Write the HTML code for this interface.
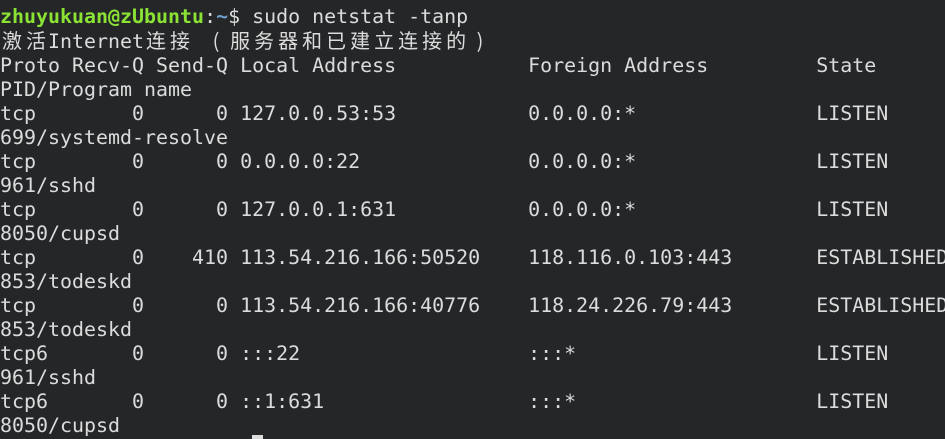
<!DOCTYPE html>
<html><head><meta charset="utf-8"><style>
html,body{margin:0;padding:0;background:#242628;width:945px;height:439px;overflow:hidden}
pre{position:absolute;left:0;top:4px;margin:0;font-family:"DejaVu Sans Mono","Liberation Mono","Noto Sans CJK SC",monospace;font-size:19.95px;line-height:24px;color:#dcdcdc;white-space:pre}
.g{color:#8ae234;font-weight:bold}.b{color:#729fcf;font-weight:bold}
.c{display:inline-block;width:24px;text-align:center;font-family:"Noto Sans CJK SC",sans-serif}
.cur{position:absolute;left:252px;top:435px;width:11px;height:4px;background:#dcdcdc}
</style></head><body>
<pre><span class="g">zhuyukuan@zUbuntu</span>:<span class="b">~</span>$ sudo netstat -tanp
<span class="c">激</span><span class="c">活</span>Internet<span class="c">连</span><span class="c">接</span> <span class="c">(</span><span class="c">服</span><span class="c">务</span><span class="c">器</span><span class="c">和</span><span class="c">已</span><span class="c">建</span><span class="c">立</span><span class="c">连</span><span class="c">接</span><span class="c">的</span><span class="c">)</span>
Proto Recv-Q Send-Q Local Address           Foreign Address         State
PID/Program name
tcp        0      0 127.0.0.53:53           0.0.0.0:*               LISTEN
699/systemd-resolve
tcp        0      0 0.0.0.0:22              0.0.0.0:*               LISTEN
961/sshd
tcp        0      0 127.0.0.1:631           0.0.0.0:*               LISTEN
8050/cupsd
tcp        0    410 113.54.216.166:50520    118.116.0.103:443       ESTABLISHED
853/todeskd
tcp        0      0 113.54.216.166:40776    118.24.226.79:443       ESTABLISHED
853/todeskd
tcp6       0      0 :::22                   :::*                    LISTEN
961/sshd
tcp6       0      0 ::1:631                 :::*                    LISTEN
8050/cupsd</pre>
<div class="cur"></div>
</body></html>
